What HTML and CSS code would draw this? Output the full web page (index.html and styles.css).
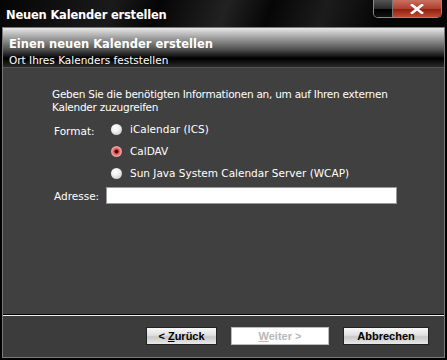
FILE: index.html
```html
<!DOCTYPE html>
<html lang="de">
<head>
  <meta charset="UTF-8" />
  <title>Neuen Kalender erstellen</title>
  <link rel="stylesheet" href="styles.css">
</head>
<body>
  <div class="window">
    <div class="titlebar">
      <span class="title">Neuen Kalender erstellen</span>
      <div class="caption-btns">
        <span class="cap-blank"></span>
        <span class="cap-close">
          <svg width="16" height="10" viewBox="0 0 16 10"><path d="M3 1 L13 9 M13 1 L3 9" stroke="#fff" stroke-width="2.6" stroke-linecap="square"/></svg>
        </span>
      </div>
    </div>

    <div class="frame">
      <div class="header">
        <div class="header-title">Einen neuen Kalender erstellen</div>
        <div class="header-sub">Ort Ihres Kalenders feststellen</div>
      </div>

      <div class="content">
        <p class="intro">Geben Sie die benötigten Informationen an, um auf Ihren externen<br>Kalender zuzugreifen</p>

        <div class="row">
          <span class="label">Format:</span>
          <div class="options">
            <label class="radio"><span class="dot"></span>iCalendar (ICS)</label>
            <label class="radio"><span class="dot checked"></span>CalDAV</label>
            <label class="radio"><span class="dot"></span>Sun Java System Calendar Server (WCAP)</label>
          </div>
        </div>

        <div class="row address">
          <span class="label">Adresse:</span>
          <input class="field" type="text" />
        </div>
      </div>

      <div class="footer">
        <button class="btn">&lt; <u>Z</u>urück</button>
        <button class="btn disabled"><u>W</u>eiter &gt;</button>
        <button class="btn">Abbrechen</button>
      </div>
    </div>
  </div>
</body>
</html>
```

FILE: styles.css
```css
body {
  margin: 0;
  background: #000;
  font-family: "DejaVu Sans", sans-serif;
  font-size: 11px;
  color: #fff;
}
.window {
  width: 447px;
  height: 360px;
  background: #000;
  display: flex;
  flex-direction: column;
}
.titlebar {
  height: 27px;
  display: flex;
  align-items: flex-start;
  background: linear-gradient(110deg, #050505 0%, #1a1a1a 25%, #050505 35%, #222 50%, #060606 60%, #1c1c1c 72%, #050505 85%);
}
.title {
  font-weight: bold;
  font-size: 11.5px;
  margin: 8px 0 0 6px;
  letter-spacing: -0.2px;
}
.caption-btns {
  margin-left: auto;
  margin-right: 5px;
  display: flex;
  height: 17px;
  border: 1px solid #8a8a8a;
  border-top: none;
  border-radius: 0 0 5px 5px;
  overflow: hidden;
}
.cap-blank {
  width: 18px;
  background: linear-gradient(#555 0%, #2a2a2a 50%, #000 55%, #111 100%);
  border-right: 1px solid #777;
}
.cap-close {
  width: 48px;
  display: flex;
  align-items: center;
  justify-content: center;
  background: linear-gradient(#c87060 0%, #b04030 50%, #902010 55%, #c04a30 100%);
}
.frame {
  flex: 1;
  margin: 0 2px 2px;
  border: 1px solid #7a7a7a;
  display: flex;
  flex-direction: column;
}
.header {
  height: 40px;
  padding: 9px 0 0 6px;
  box-sizing: border-box;
  background: linear-gradient(#e8e8e8 0%, #a0a0a0 25%, #505050 55%, #000 78%, #2a2a2a 100%);
  border-bottom: 1px solid #555;
}
.header-title {
  font-weight: bold;
  font-size: 11.5px;
}
.header-sub {
  margin-top: 3px;
  font-size: 10.5px;
}
.content {
  flex: 1;
  background: #404040;
  padding: 20px 0 0 49px;
  font-size: 10.5px;
}
.intro {
  margin: 0 0 8px;
  line-height: 13px;
  letter-spacing: -0.25px;
  white-space: nowrap;
}
.row {
  display: flex;
}
.label {
  width: 56px;
  padding-left: 2px;
  padding-top: 3px;
}
.options {
  display: flex;
  flex-direction: column;
  gap: 8px;
  padding-left: 1px;
}
.radio {
  display: flex;
  align-items: center;
  gap: 8px;
  height: 14px;
}
.dot {
  width: 11px;
  height: 11px;
  border-radius: 50%;
  background: radial-gradient(circle at 40% 35%, #fff 0%, #f0f0f0 40%, #b8b8b8 100%);
}
.dot.checked {
  background: radial-gradient(circle at 50% 50%, #400 0%, #600 22%, #e05050 30%, #f0a0a0 60%, #c06060 100%);
}
.address {
  margin-top: 7px;
  align-items: center;
}
.address .label {
  width: 52px;
  padding-top: 0;
}
.field {
  width: 291px;
  height: 17px;
  box-sizing: border-box;
  border: 1px solid #999;
  background: #fff;
  padding: 0;
}
.footer {
  height: 42px;
  border-top: 1px solid #000;
  box-shadow: inset 0 1px 0 #f0f0f0;
  background: #3c3c3c;
  display: flex;
  align-items: center;
  justify-content: flex-end;
  gap: 14px;
  padding-right: 15px;
}
.btn {
  height: 18px;
  width: 71px;
  border: 1px solid #222;
  background: linear-gradient(#f8f8f8 0%, #e0e0e0 45%, #c8c8c8 55%, #e8e8e8 100%);
  font-family: "Liberation Sans", sans-serif;
  font-weight: bold;
  font-size: 11px;
  color: #000;
  padding: 0;
}
.btn.disabled {
  width: 98px;
  background: #fff;
  color: #b8b8b8;
  border-color: #bbb;
}
.btn:last-child {
  width: 86px;
}
```
